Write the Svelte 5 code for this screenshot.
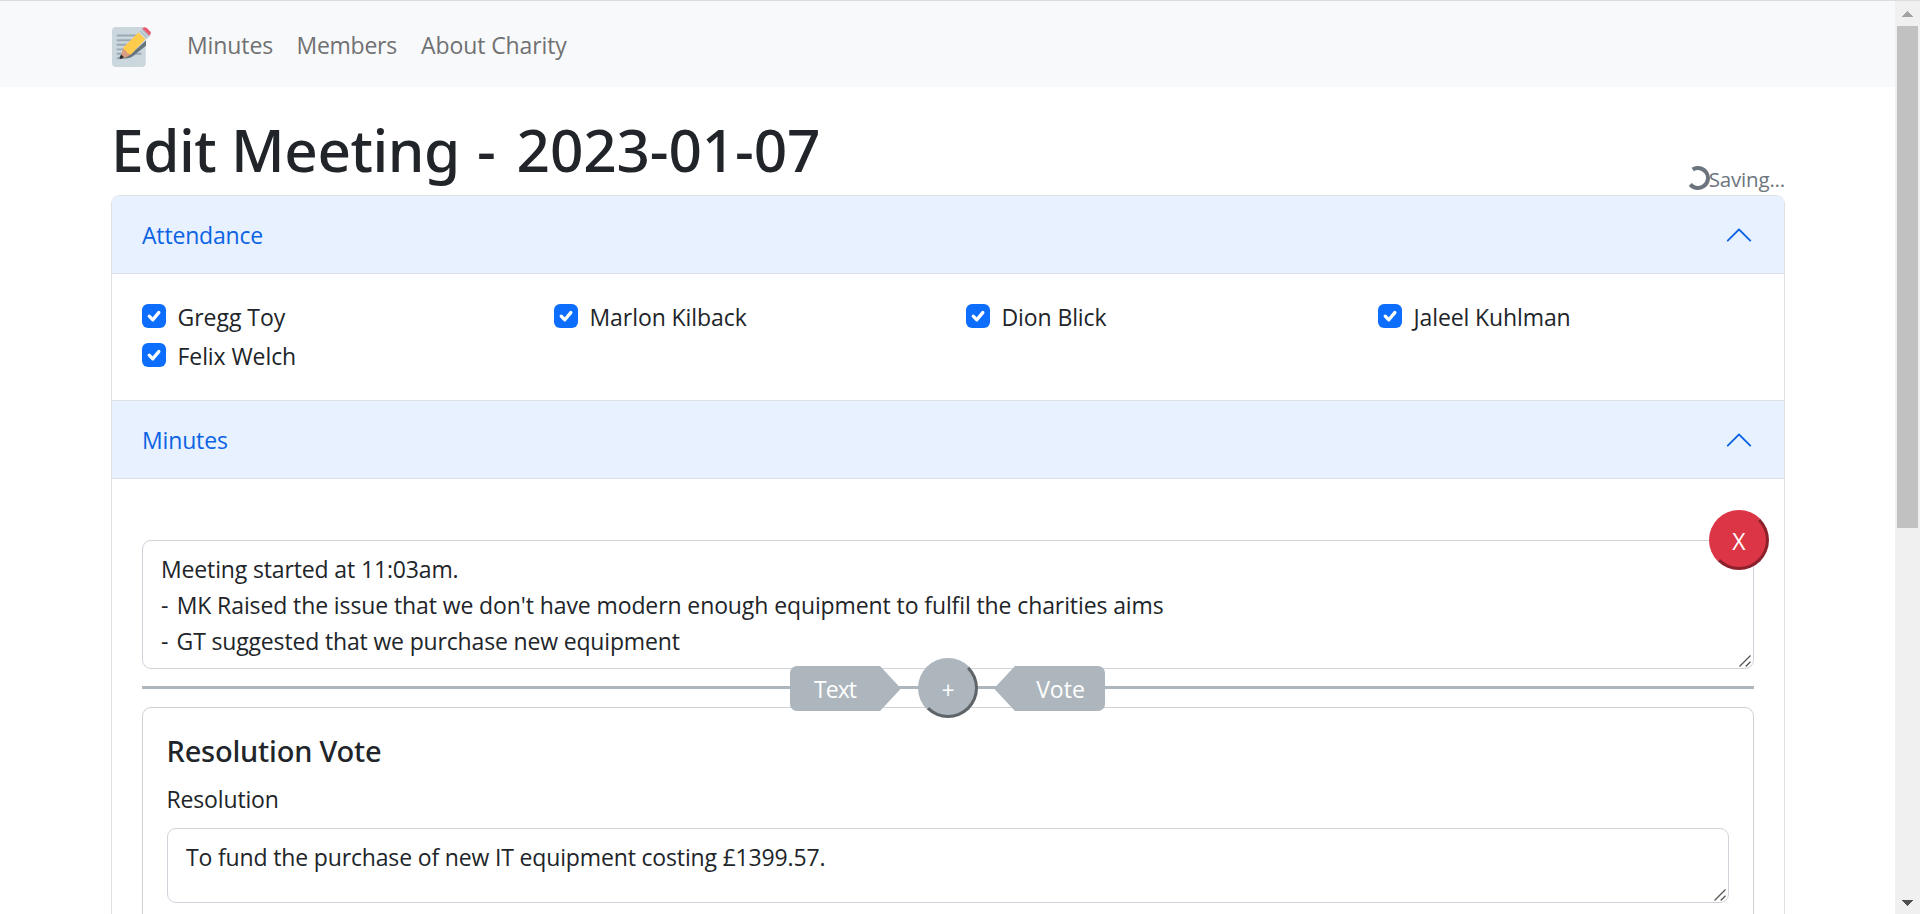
<script>
  const links = [
    { label: 'Minutes', width: 109.5, spacing: -0.1 },
    { label: 'Members', width: 124.5, spacing: -0.26 },
    { label: 'About Charity', width: 150, spacing: -0.1 }
  ];
  const members = [
    { name: 'Gregg Toy', spacing: -0.03 },
    { name: 'Marlon Kilback', spacing: -0.07 },
    { name: 'Dion Blick', spacing: -0.1 },
    { name: 'Jaleel Kuhlman', spacing: -0.11 },
    { name: 'Felix Welch', spacing: -0.08 }
  ];
  const notes = [
    { text: 'Meeting started at 11:03am.', spacing: -0.14 },
    { dash: true, text: "MK Raised the issue that we don't have modern enough equipment to fulfil the charities aims", spacing: -0.104 },
    { dash: true, text: 'GT suggested that we purchase new equipment', spacing: -0.16 }
  ];
</script>

{#snippet chevron()}
  <svg class="chevron" viewBox="0 0 16 16" fill="#0c63e4">
    <path transform="rotate(180 8 8)" fill-rule="evenodd" d="M1.646 4.646a.5.5 0 0 1 .708 0L8 10.293l5.646-5.647a.5.5 0 0 1 .708.708l-6 6a.5.5 0 0 1-.708 0l-6-6a.5.5 0 0 1 0-.708z" />
  </svg>
{/snippet}

{#snippet grip()}
  <svg class="grip" viewBox="0 0 12 12" fill="none" stroke="#555" stroke-width="1.3">
    <path d="M.5 11.5 11.5.5M6.7 11.5l4.8-4.8" />
  </svg>
{/snippet}

<div class="window">
  <div class="page">
    <nav>
      <svg class="logo" viewBox="0 0 40 40">
        <rect width="33.7" height="40" rx="4" fill="#ccd6dd" />
        <path d="M5.5 8.5h20M5.5 13.3h20M5.5 17.8h18M5.5 22.4h18M5.5 26.8h23.2M5.5 31.3h3" stroke="#99aab5" stroke-width="1.9" stroke-linecap="round" />
        <path d="M34 13.5v5.2L20.5 29.6q-3.5 2.2-11 2.2L19 27z" fill="#66757f" />
        <path d="M11.5 20.5 19.3 27.2Q14 31 9.2 31.9 7.9 31.4 8.4 30z" fill="#d99e82" />
        <path d="M27.2 4.8 11.3 20.4q.2 2.6 2.8 3 .8 3.6 5 3.9L34 11.6z" fill="#ffcc4d" />
        <path d="M26.6 5.4 31 1l7.5 7.2-4.7 4.6z" fill="#ccd6dd" />
        <path d="m28.2 3.8 7.2 7.3M29.9 2.1l7.2 7.3" stroke="#99aab5" stroke-width="1" />
        <path d="m30.4 1.6 1.2-1q1.6-1.1 3.2.4l3.2 3.2q1.6 1.6.4 3.2l-1.1 1.2z" fill="#ea596e" />
        <path d="m9.3 27.6 2.7 2.6q-1.2 1.4-3.3 1.7-1.7-.2-1.1-1.9z" fill="#292f33" />
      </svg>
      <div class="links">
        {#each links as l}
          <a href="#top" style="width:{l.width}px;letter-spacing:{l.spacing}px">{l.label}</a>
        {/each}
      </div>
    </nav>

    <main>
      <header>
        <h1><span class="title">Edit Meeting</span> - <span class="date">2023-01-07</span></h1>
        <div class="saving">
          <svg class="spinner" viewBox="0 0 24 24" fill="none" stroke="#6c757d" stroke-width="4">
            <path d="M6.7 3.5A10 10 0 1 1 4.3 18.4" />
          </svg>
          <span>Saving...</span>
        </div>
      </header>

      <div class="accordion">
        <button class="bar first"><span class="attendance">Attendance</span>{@render chevron()}</button>
        <div class="people">
          {#each members as m}
            <label style="letter-spacing:{m.spacing}px">
              <svg class="check" viewBox="0 0 24 24">
                <rect width="24" height="24" rx="6" fill="#0d6efd" />
                <path d="m7.2 12 3.6 3.6 6-7.2" transform="translate(0 .2)" fill="none" stroke="#fff" stroke-width="3.3" stroke-linecap="round" stroke-linejoin="round" />
              </svg>
              {m.name}
            </label>
          {/each}
        </div>
        <button class="bar second"><span class="heading">Minutes</span>{@render chevron()}</button>
        <div class="minutes">
          <div class="field notes">
            {#each notes as n}
              <div style="letter-spacing:{n.spacing}px">{#if n.dash}<span class="dash">-</span>{' '}{/if}{n.text}</div>
            {/each}
            {@render grip()}
            <button class="round remove">X</button>
          </div>

          <div class="insert">
            <div class="rule"></div>
            <div class="controls">
              <button class="tag text"><span>Text</span></button>
              <button class="round add">+</button>
              <button class="tag vote"><span>Vote</span></button>
            </div>
          </div>

          <section class="card">
            <h2>Resolution Vote</h2>
            <p>Resolution</p>
            <div class="field resolution">
              To fund the purchase of new IT equipment costing £1399.57.
              {@render grip()}
            </div>
          </section>
        </div>
      </div>
    </main>
  </div>

  <div class="scrollbar">
    <svg class="up" viewBox="0 0 11 6" shape-rendering="crispEdges"><path d="M0 6 5.5 0 11 6z" fill="#a3a3a3" /></svg>
    <div class="thumb"></div>
    <svg class="down" viewBox="0 0 11 6" shape-rendering="crispEdges"><path d="M0 0 5.5 6 11 0z" fill="#505050" /></svg>
  </div>
</div>

<style>
  :global(body) { margin: 0; overflow: hidden; }
  .window, .window * { box-sizing: border-box; }
  .window {
    display: flex;
    width: 1920px;
    height: 914px;
    overflow: hidden;
    border-top: 1px solid #dadce0;
    background: #fff;
    color: #212529;
    font: 400 23px/36px 'Open Sans', 'Noto Sans', sans-serif;
  }
  .window svg { display: block; flex: none; }
  .page { flex: 1; min-width: 0; }
  button { font: inherit; margin: 0; padding: 0; border: 0; }

  nav {
    display: flex;
    align-items: center;
    height: 86px;
    padding: 6px 111px 0 112px;
    background: #f8f9fa;
  }
  .logo { width: 40px; height: 40px; overflow: visible; }
  .links { display: flex; margin: 0 0 4px 35px; }
  .links a { color: #707172; text-decoration: none; white-space: nowrap; }

  main { padding: 0 110px 0 111px; }
  header {
    display: flex;
    justify-content: space-between;
    align-items: flex-end;
    height: 108px;
  }
  h1 {
    margin: 0 0 10px;
    font: 500 58.5px/72px 'Noto Sans', sans-serif;
    white-space: nowrap;
  }
  .title { margin-right: 2px; letter-spacing: -0.45px; }
  .date { margin-left: 5.5px; letter-spacing: -0.15px; }
  .saving {
    display: flex;
    align-items: center;
    color: #6c757d;
    font-size: 20.5px;
    line-height: 31px;
    letter-spacing: -0.19px;
  }
  .spinner { width: 24px; height: 24px; margin-bottom: 3px; }
  .saving span { margin-left: -1px; }

  .accordion {
    height: 800px;
    border: 1px solid #dee2e6;
    border-radius: 9px 9px 0 0;
    overflow: hidden;
  }
  .bar {
    display: flex;
    justify-content: space-between;
    align-items: center;
    width: 100%;
    height: 78px;
    padding: 0 30px;
    background: #e7f1ff;
    color: #0c63e4;
    border-bottom: 1px solid #d8dfe8;
  }
  .attendance { letter-spacing: -0.18px; }
  .heading { letter-spacing: -0.15px; }
  .chevron { width: 30px; height: 30px; }
  .second { height: 79px; border-top: 1px solid #dee2e6; }

  .people {
    display: grid;
    grid-template-columns: repeat(4, 412px);
    grid-auto-rows: 39px;
    height: 126px;
    padding: 24px 0 0 30px;
  }
  label { display: flex; gap: 11.5px; line-height: 38px; white-space: nowrap; }
  .check { width: 24px; height: 24px; margin-top: 6px; }

  .minutes { padding: 61px 30px 0; }
  .field {
    position: relative;
    padding: 10px 18px;
    border: 1px solid #ced4da;
    border-radius: 9px;
    white-space: nowrap;
  }
  .dash { margin-right: 2.5px; }
  .grip { position: absolute; right: 2px; bottom: 1px; width: 12px; height: 12px; }
  .notes { height: 129px; }
  .round {
    width: 60px;
    height: 60px;
    border: 3px solid;
    border-radius: 50%;
    color: #fff;
    text-align: center;
  }
  .remove {
    position: absolute;
    top: -31px;
    right: -16px;
    padding-top: 2px;
    background: #dc3545;
    border-color: #dc3545 #8a212b #8a212b #dc3545;
  }

  .insert { display: grid; align-items: center; justify-items: center; height: 38px; }
  .insert > * { grid-area: 1 / 1; }
  .rule { width: 100%; height: 3px; margin-bottom: 1px; background: #adb5bd; }
  .controls { display: flex; align-items: center; margin: -20px 1px -20px 0; z-index: 1; }
  .tag { width: 111px; height: 45px; margin-top: 1px; background: #adb5bd; color: #fff; }
  .text {
    padding-right: 21px;
    border-radius: 7px 0 0 7px;
    clip-path: polygon(0 0, 90px 0, 100% 50%, 90px 100%, 0 100%);
    letter-spacing: -1px;
  }
  .vote {
    padding-left: 22px;
    border-radius: 0 7px 7px 0;
    clip-path: polygon(21px 0, 100% 0, 100% 100%, 21px 100%, 0 50%);
  }
  .add {
    margin: 0 16px 0 17px;
    padding-top: 3px;
    background: #adb5bd;
    border-color: #adb5bd #5f6468 #5f6468 #adb5bd;
  }

  .card {
    height: 300px;
    padding: 25px 24px 0;
    border: 1px solid #cfd1d3;
    border-radius: 9px;
  }
  h2 { margin: 0 0 0 -0.5px; font: 500 29px/36px 'Noto Sans', sans-serif; letter-spacing: -0.2px; }
  p { margin: 12px 0 11px -0.5px; letter-spacing: -0.15px; }
  .resolution { height: 75px; letter-spacing: -0.156px; }

  .scrollbar {
    display: flex;
    flex-direction: column;
    align-items: center;
    width: 25px;
    padding: 10px 0 8px;
    background: #f0f0f0;
  }
  .scrollbar svg { width: 11px; height: 6px; }
  .thumb { width: 21px; height: 502px; margin-top: 9px; background: #c1c1c1; }
  .down { margin-top: auto; }
</style>
